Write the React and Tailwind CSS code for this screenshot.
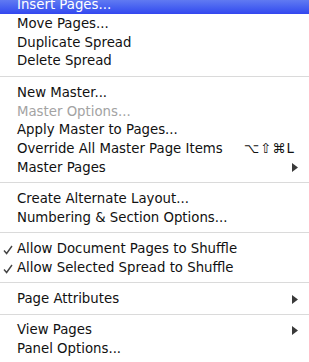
import React from "react";

const Arrow = () => (
    <svg width="6" height="9" viewBox="0 0 6 9" className="shrink-0">
        <path d="M0 0 L6 4.5 L0 9 Z" fill="#3a3a3a" />
    </svg>
);

const Check = () => (
    <svg width="10" height="10" viewBox="0 0 10 10" className="absolute left-[3px] top-[6px]">
        <path d="M1 5.5 L3.6 8.5 L9 1" fill="none" stroke="#444" strokeWidth="1.4" />
    </svg>
);

const Item = ({ label, active, disabled, checked, shortcut, submenu }) => (
    <div
        className={`relative h-[18.7px] flex items-center pt-[1px] pl-[17px] pr-[11px] ${active
            ? "bg-gradient-to-b from-[#6f86f2] to-[#3346ef] text-white"
            : disabled
                ? "text-[#a3a3a3]"
                : "text-[#111]"
            }`}
    >
        {checked && <Check />}
        <span className="flex-1 whitespace-nowrap">{label}</span>
        {shortcut && <span className="pr-[3px] tracking-[1px]">{shortcut}</span>}
        {submenu && <Arrow />}
    </div>
);

const Separator = () => (
    <div className="h-[12.7px] flex items-center">
        <div className="w-full h-px bg-[#dadada]" />
    </div>
);

export default function App() {
    return (
        <div
            className="w-[309px] h-[362px] overflow-hidden bg-white text-[13.3px]"
            style={{ fontFamily: '"DejaVu Sans", "Liberation Sans", sans-serif' }}
        >
            <div className="mt-[-4.5px] flex flex-col">
                <Item label="Insert Pages..." active />
                <Item label="Move Pages..." />
                <Item label="Duplicate Spread" />
                <Item label="Delete Spread" />
                <Separator />
                <Item label="New Master..." />
                <Item label="Master Options..." disabled />
                <Item label="Apply Master to Pages..." />
                <Item label="Override All Master Page Items" shortcut="⌥⇧⌘L" />
                <Item label="Master Pages" submenu />
                <Separator />
                <Item label="Create Alternate Layout..." />
                <Item label="Numbering & Section Options..." />
                <Separator />
                <Item label="Allow Document Pages to Shuffle" checked />
                <Item label="Allow Selected Spread to Shuffle" checked />
                <Separator />
                <Item label="Page Attributes" submenu />
                <Separator />
                <Item label="View Pages" submenu />
                <Item label="Panel Options..." />
            </div>
        </div>
    );
}
